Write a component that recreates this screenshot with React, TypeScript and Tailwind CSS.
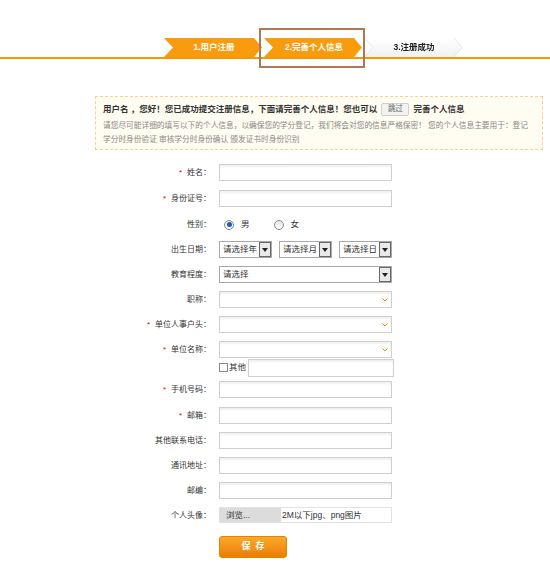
import React from "react";

const font = { fontFamily: '"Liberation Sans", "Noto Sans CJK SC", sans-serif' };

function Caret() {
  return <span className="h-0 w-0 border-x-[3px] border-t-[4px] border-x-transparent border-t-[#222]" />;
}

function ClassicSelect({ text, w }: { text: string; w: string }) {
  return (
    <div className={`flex h-[17px] items-center justify-between border border-[#a9a9a9] bg-white ${w}`}>
      <span className="pl-[3px] text-[8.5px] leading-none text-[#333]">{text}</span>
      <span className="flex h-[15px] w-[12px] items-center justify-center border border-[#666] bg-[#e9e9e9]">
        <Caret />
      </span>
    </div>
  );
}

function TextInput({ w = "w-[173px]", h = "h-[17px]" }: { w?: string; h?: string }) {
  return <div className={`${w} ${h} border border-[#cfcfcf] bg-white shadow-[inset_0_2px_2px_rgba(0,0,0,0.06)]`} />;
}

function ComboInput() {
  return (
    <div className="flex h-[17px] w-[173px] items-center justify-end border border-[#cfcfcf] bg-white pr-[3px] shadow-[inset_0_2px_2px_rgba(0,0,0,0.06)]">
      <svg width="6" height="4" viewBox="0 0 6 4">
        <polyline points="0.5,0.5 3,3 5.5,0.5" fill="none" stroke="#f08c00" strokeWidth="1" />
      </svg>
    </div>
  );
}

function Row({ label, req, h, children }: { label: string; req?: boolean; h: string; children: React.ReactNode }) {
  return (
    <div className={`flex items-start pt-[4px] ${h}`}>
      <div className="h-[17px] w-[212px] pr-[1px] text-right text-[8px] leading-[17px] text-[#333]">
        {req && <span className="mr-[5px] text-[#e60012]">*</span>}
        {label}：
      </div>
      <div className="ml-[7px] flex items-center">{children}</div>
    </div>
  );
}

function Radio({ checked }: { checked?: boolean }) {
  return (
    <span className="flex h-[10px] w-[10px] items-center justify-center rounded-full border border-[#8c8c8c] bg-gradient-to-b from-[#e6e6e6] to-white">
      {checked && <span className="h-[5px] w-[5px] rounded-full bg-[#1e5fb4]" />}
    </span>
  );
}

const step = "[clip-path:polygon(0_0,90px_0,98px_50%,90px_100%,0_100%,9px_50%)]";

export default function App() {
  return (
    <div className="min-h-[573px] w-[550px] bg-white" style={font}>
      {/* Steps */}
      <div className="relative pt-[38px]">
        <div className="flex h-[19px] gap-[2px] pl-[164px]">
          <div className={`flex w-[98px] items-center justify-center bg-[#f99b0e] pl-[2px] text-[8.5px] font-bold text-white ${step}`}>
            1.用户注册
          </div>
          <div className={`flex w-[98px] items-center justify-center bg-[#f99b0e] pl-[2px] text-[8.5px] font-bold text-white ${step}`}>
            2.完善个人信息
          </div>
          <div className="w-[98px] drop-shadow-[0_0_0.6px_#9a9a9a]">
            <div className={`flex h-full items-center justify-center bg-gradient-to-b from-white to-[#f1f1f1] pl-[2px] text-[8.5px] font-bold text-[#222] ${step}`}>
              3.注册成功
            </div>
          </div>
        </div>
        <div className="h-[2px] bg-[#f39800]" />
        <div className="absolute left-[259px] top-[28px] h-[40px] w-[106px] border-2 border-[#b07756]" />
      </div>

      {/* Notice */}
      <div className="ml-[95px] mt-[37px] h-[54px] w-[448px] border border-dashed border-[#f9cfa0] bg-[#fffcf1] pl-[7px] pt-[4px]">
        <div className="flex h-[16px] items-center whitespace-nowrap text-[8.5px] font-bold text-[#333]">
          用户名 ，您好！您已成功提交注册信息，下面请完善个人信息！您也可以
          <span className="mx-[4px] flex h-[13px] w-[28px] items-center justify-center rounded-[2px] border border-[#cfcfcf] bg-[#f3f3f3] text-[7.5px] font-normal text-[#666]">
            跳过
          </span>
          完善个人信息
        </div>
        <div className="mt-[2px] whitespace-nowrap text-[7.7px] leading-[14px] text-[#888]">
          请您尽可能详细的填写以下的个人信息，以确保您的学分登记，我们将会对您的信息严格保密！ 您的个人信息主要用于：登记
          <br />
          学分时身份验证 审核学分时身份确认 颁发证书时身份识别
        </div>
      </div>

      {/* Form */}
      <div className="mt-[10px]">
        <Row label="姓名" req h="h-[26px]">
          <TextInput />
        </Row>
        <Row label="身份证号" req h="h-[26px]">
          <TextInput />
        </Row>
        <Row label="性别" h="h-[25px]">
          <div className="flex h-[17px] items-center text-[8.5px] text-[#333]">
            <span className="ml-[5px]"><Radio checked /></span>
            <span className="ml-[7px]">男</span>
            <span className="ml-[24px]"><Radio /></span>
            <span className="ml-[7px]">女</span>
          </div>
        </Row>
        <Row label="出生日期" h="h-[25px]">
          <div className="flex gap-[7px]">
            <ClassicSelect text="请选择年" w="w-[53px]" />
            <ClassicSelect text="请选择月" w="w-[53px]" />
            <ClassicSelect text="请选择日" w="w-[53px]" />
          </div>
        </Row>
        <Row label="教育程度" h="h-[25px]">
          <ClassicSelect text="请选择" w="w-[173px]" />
        </Row>
        <Row label="职称" h="h-[25px]">
          <ComboInput />
        </Row>
        <Row label="单位人事户头" req h="h-[25px]">
          <ComboInput />
        </Row>
        <Row label="单位名称" req h="h-[21px]">
          <ComboInput />
        </Row>
        <div className="flex h-[19px] items-center pl-[219px]">
          <span className="h-[9px] w-[9px] border border-[#8a8a8a] bg-white" />
          <span className="ml-[1px] text-[8.5px] text-[#333]">其他</span>
          <div className="ml-[2px]">
            <TextInput w="w-[146px]" h="h-[18px]" />
          </div>
        </div>
        <Row label="手机号码" req h="h-[26px]">
          <TextInput />
        </Row>
        <Row label="邮箱" req h="h-[25px]">
          <TextInput />
        </Row>
        <Row label="其他联系电话" h="h-[25px]">
          <TextInput />
        </Row>
        <Row label="通讯地址" h="h-[25px]">
          <TextInput />
        </Row>
        <Row label="邮编" h="h-[25px]">
          <TextInput />
        </Row>
        <Row label="个人头像" h="h-[25px]">
          <div className="flex h-[16px] w-[173px] border border-[#e2e2e2] bg-white text-[8.5px] text-[#333]">
            <span className="flex w-[61px] items-center bg-[#dcdcdc] pl-[6px]">浏览...</span>
            <span className="flex items-center pl-[1px]">2M以下jpg、png图片</span>
          </div>
        </Row>
        <div className="pl-[219px] pt-[4px]">
          <button className="h-[22px] w-[68px] rounded-[3px] border border-[#e38400] bg-gradient-to-b from-[#f9a92a] to-[#ee7c00] text-[9px] font-bold text-white">
            保&nbsp;&nbsp;存
          </button>
        </div>
      </div>
    </div>
  );
}
